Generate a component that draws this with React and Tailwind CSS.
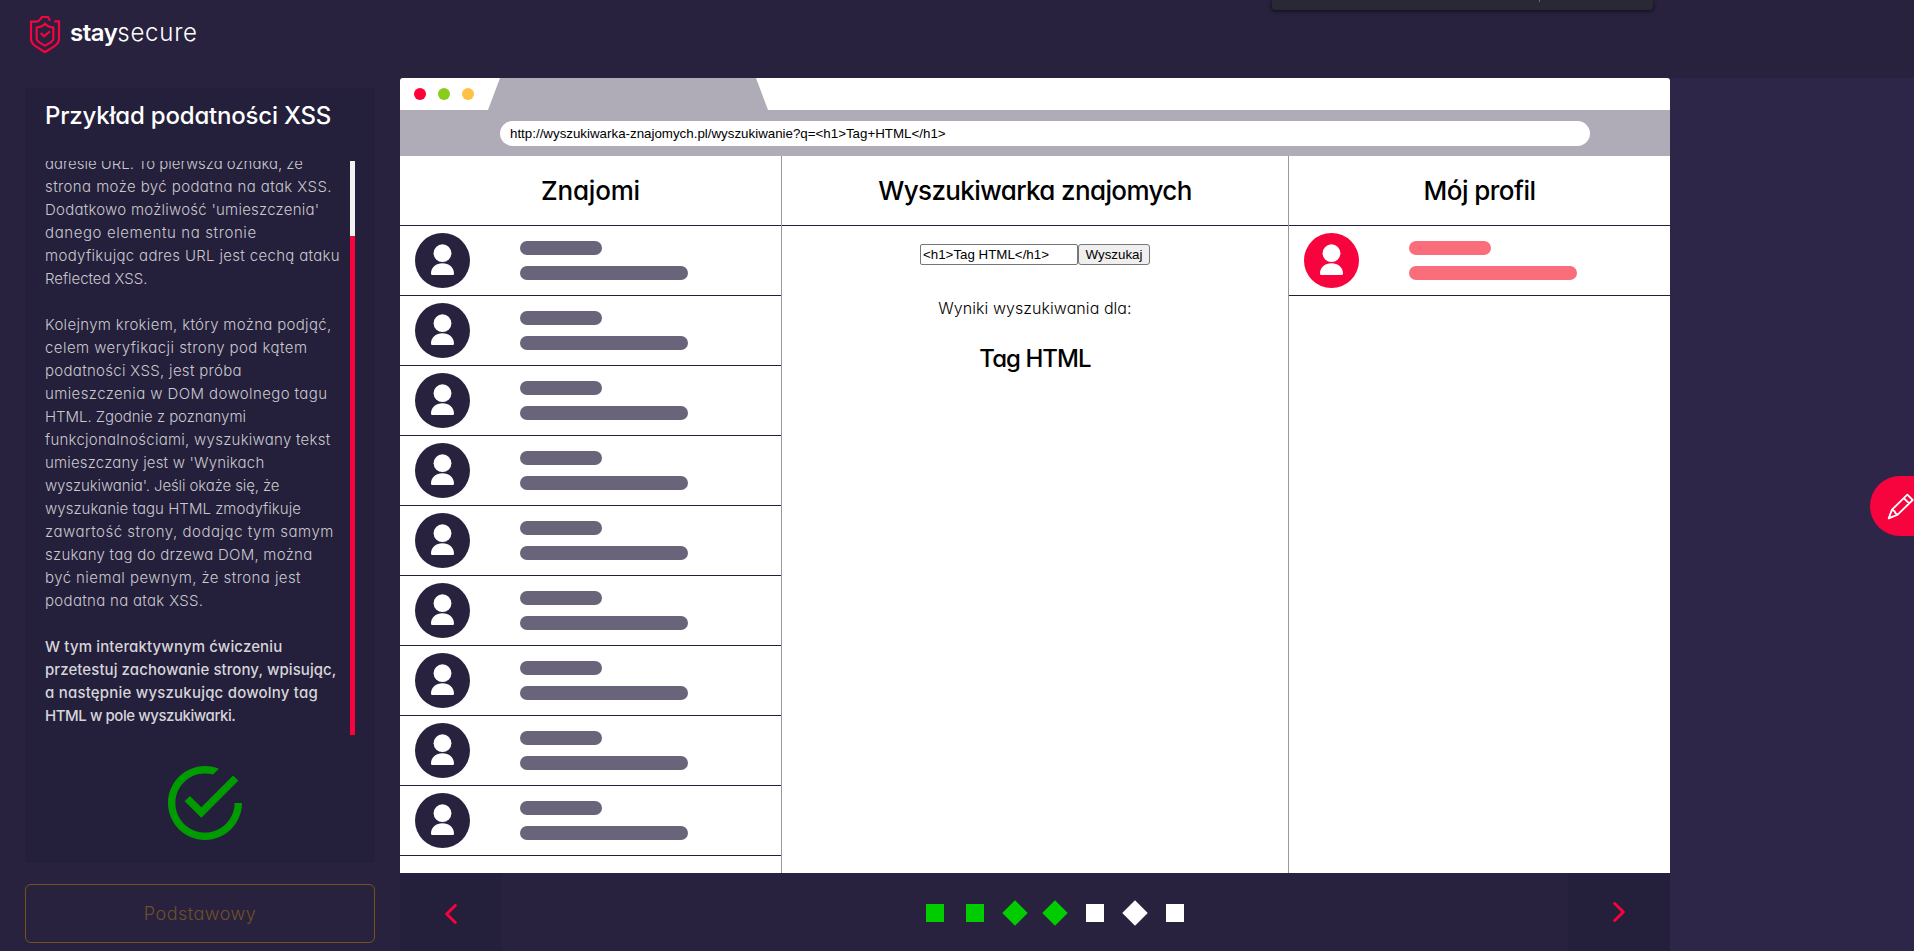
import { IoMdCheckmarkCircleOutline } from "react-icons/io";

const lessonLines = [
  ["adresie URL. To pierwsza oznaka, że", "tracking-[-0.04px]"],
  ["strona może być podatna na atak XSS.", "tracking-[0.4px]"],
  ["Dodatkowo możliwość 'umieszczenia'", "tracking-[0.24px]"],
  ["danego elementu na stronie", "tracking-[0.6px]"],
  ["modyfikując adres URL jest cechą ataku", "tracking-[0.325px]"],
  ["Reflected XSS.", "tracking-[-0.05px]"],
  null,
  ["Kolejnym krokiem, który można podjąć,", "tracking-[0.31px]"],
  ["celem weryfikacji strony pod kątem", "tracking-[0.435px]"],
  ["podatności XSS, jest próba", "tracking-[0.3px]"],
  ["umieszczenia w DOM dowolnego tagu", "tracking-[0.395px]"],
  ["HTML. Zgodnie z poznanymi", "tracking-[-0.05px]"],
  ["funkcjonalnościami, wyszukiwany tekst", "tracking-[0.255px]"],
  ["umieszczany jest w 'Wynikach", "tracking-[0.175px]"],
  ["wyszukiwania'. Jeśli okaże się, że", "tracking-[-0.11px]"],
  ["wyszukanie tagu HTML zmodyfikuje", "tracking-[0.035px]"],
  ["zawartość strony, dodając tym samym", "tracking-[0.52px]"],
  ["szukany tag do drzewa DOM, można", "tracking-[0.26px]"],
  ["być niemal pewnym, że strona jest", "tracking-[0.425px]"],
  ["podatna na atak XSS.", "tracking-[0.31px]"],
  null,
];

const taskLines = [
  ["W tym interaktywnym ćwiczeniu", "tracking-[0.145px]"],
  ["przetestuj zachowanie strony, wpisując,", "tracking-[0.075px]"],
  ["a następnie wyszukując dowolny tag", "tracking-[0.205px]"],
  ["HTML w pole wyszukiwarki.", "tracking-[-0.44px]"],
];

const steps = [
  { shape: "square", done: true },
  { shape: "square", done: true },
  { shape: "diamond", done: true },
  { shape: "diamond", done: true },
  { shape: "square", done: false },
  { shape: "diamond", done: false },
  { shape: "square", done: false },
];

function TextLine({ line }) {
  if (!line) return <div className="h-[23px]" />;
  return <div className={`h-[23px] whitespace-nowrap ${line[1]}`}>{line[0]}</div>;
}

function Logo() {
  return (
    <header className="flex h-[78px] items-start bg-[#28223f] pl-[29px] pt-[15px]">
      <svg viewBox="87 45 96 117" className="h-[39px] w-8" fill="none" stroke="#f7033d" strokeWidth="6.5">
        <path d="M150 62l-6-11h-18l-6 8q-4 6-11 6H93v52c0 17 21 26 42 39 21-13 42-22 42-39V64h-14" />
        <path d="M135 71c-7 8-15 10-25 12v33c0 9 14 14 25 21 11-7 25-12 25-21V83c-10-2-18-4-25-12z" />
        <path d="M122 99l10 10 18-15" />
      </svg>
      <div className="ml-[9px] mt-0.5 flex text-2xl leading-8 text-white">
        <span className="font-semibold tracking-[-0.5px]">stay</span>
        <span className="font-light tracking-[0.75px]">secure</span>
      </div>
    </header>
  );
}

function Sidebar() {
  return (
    <aside className="flex w-[400px] shrink-0 flex-col bg-[#28223f] px-[25px] pt-[10px]">
      <section className="flex h-[775px] flex-col bg-[#241f3a] pl-5 pr-5 pt-3">
        <h1 className="h-[61px] whitespace-nowrap text-2xl font-medium leading-8 tracking-[-0.19px] text-white">
          Przykład podatności XSS
        </h1>
        <div className="flex h-[574px] justify-between overflow-hidden">
          <div className="-mt-[9px] w-[300px] text-[15px] leading-[23px] text-[#c9c8ce]">
            <div className="font-light">
              {lessonLines.map((line, i) => (
                <TextLine key={i} line={line} />
              ))}
            </div>
            <div className="font-medium text-[#d6d5da]">
              {taskLines.map((line, i) => (
                <TextLine key={i} line={line} />
              ))}
            </div>
          </div>
          <div className="h-full w-[5px] bg-[#f7033d]">
            <div className="h-[75px] bg-[#f2f2f2]" />
          </div>
        </div>
        <div className="flex justify-center pl-[10px] pt-[31px]">
          <IoMdCheckmarkCircleOutline viewBox="48 48 416 416" className="size-[74px] text-[#009b00]" />
        </div>
      </section>
      <button className="mt-[21px] h-[59px] rounded-md border border-[#73541f] text-lg font-light tracking-[0.5px] text-[#6d502a]">
        Podstawowy
      </button>
    </aside>
  );
}

function Person({ circle, bar }) {
  return (
    <div className="flex h-[70px] items-start border-b border-[#241f3a] pl-[15px] pt-[7px]">
      <svg viewBox="0 0 55 55" className="size-[55px]">
        <circle cx="27.5" cy="27.5" r="27.5" className={circle} />
        <circle cx="27.5" cy="20.2" r="8.9" fill="#fff" />
        <path
          d="M17.3 42a1.3 1.3 0 0 1-1.3-1.3C16 34.2 21.2 30.3 27.5 30.3S39 34.2 39 40.7a1.3 1.3 0 0 1-1.3 1.3z"
          fill="#fff"
        />
      </svg>
      <div className="ml-[50px] flex flex-col gap-[11px] pt-2">
        <div className={`h-[14px] w-[82px] rounded-full ${bar}`} />
        <div className={`h-[14px] w-[168px] rounded-full ${bar}`} />
      </div>
    </div>
  );
}

function ColumnTitle({ children, tracking }) {
  return (
    <h2
      className={`flex h-[70px] items-center justify-center whitespace-nowrap border-b border-[#241f3a] pb-px text-[26px] font-medium ${tracking}`}
    >
      {children}
    </h2>
  );
}

function BrowserWindow() {
  return (
    <div className="flex h-[795px] flex-col overflow-hidden rounded-t-[3px] bg-white text-black">
      <div className="flex h-8">
        <div className="flex w-[88px] items-center gap-3 pl-[14px]">
          <span className="size-3 rounded-full bg-[#ff0039]" />
          <span className="size-3 rounded-full bg-[#88cc1c]" />
          <span className="size-3 rounded-full bg-[#ffc045]" />
        </div>
        <svg viewBox="0 0 280 32" className="h-8 w-[280px]">
          <path d="M0 32L12 0h256l12 32z" fill="#afacb7" />
        </svg>
      </div>
      <div className="h-[46px] bg-[#afacb7] pl-[100px] pr-20 pt-[11px]">
        <div className="flex h-[25px] items-center rounded-full bg-white px-[10px] font-['Liberation_Sans',Arial,sans-serif] text-[13.333px]">
          http://wyszukiwarka-znajomych.pl/wyszukiwanie?q=&lt;h1&gt;Tag+HTML&lt;/h1&gt;
        </div>
      </div>
      <div className="flex grow">
        <section className="w-[381px]">
          <ColumnTitle tracking="tracking-[-0.2px]">Znajomi</ColumnTitle>
          {Array.from({ length: 9 }, (_, i) => (
            <Person key={i} circle="fill-[#28223f]" bar="bg-[#696479]" />
          ))}
        </section>
        <section className="w-[508px] border-x border-[#999999]">
          <ColumnTitle tracking="tracking-[-0.63px]">Wyszukiwarka znajomych</ColumnTitle>
          <div className="flex flex-col items-center">
            <div className="mt-[18px] flex font-['Liberation_Sans',Arial,sans-serif] text-[13.333px]">
              <input
                className="h-[21px] w-[158px] rounded-[2px] border border-[#767676] px-[2px] outline-none"
                defaultValue="<h1>Tag HTML</h1>"
              />
              <button className="h-[21px] w-[72px] rounded-[3px] border border-[#767676] bg-[#efefef] leading-none">
                Wyszukaj
              </button>
            </div>
            <p className="mt-[31px] text-base font-light leading-6 tracking-[0.06px]">Wyniki wyszukiwania dla:</p>
            <h1 className="mt-[23px] text-2xl font-medium leading-8 tracking-[-0.95px]">Tag HTML</h1>
          </div>
        </section>
        <section className="w-[381px]">
          <ColumnTitle tracking="tracking-[-0.55px]">Mój profil</ColumnTitle>
          <Person circle="fill-[#f7033d]" bar="bg-[#fa6d7b]" />
        </section>
      </div>
    </div>
  );
}

function StepBar() {
  return (
    <nav className="flex h-[78px] items-center justify-between bg-[#28223f]">
      <button className="flex h-full w-[102px] items-center justify-center bg-[#241f3a] pr-px pt-[4px]">
        <svg viewBox="0 0 12 20" className="h-5 w-3" fill="none" stroke="#f7033d" strokeWidth="3" strokeLinecap="round" strokeLinejoin="round">
          <path d="M10.3 1.5L1.7 10l8.6 8.5" />
        </svg>
      </button>
      <div className="flex gap-[22px] pl-10 pt-[2px]">
        {steps.map((step, i) => (
          <span
            key={i}
            className={`size-[18px] ${step.shape === "diamond" ? "rotate-45" : ""} ${step.done ? "bg-[#00cc00]" : "bg-white"}`}
          />
        ))}
      </div>
      <button className="flex h-full w-[102px] items-center justify-center bg-[#241f3a]">
        <svg viewBox="0 0 12 20" className="h-5 w-3" fill="none" stroke="#f7033d" strokeWidth="3" strokeLinecap="round" strokeLinejoin="round">
          <path d="M1.7 1.5l8.6 8.5-8.6 8.5" />
        </svg>
      </button>
    </nav>
  );
}

export default function App() {
  return (
    <div className="relative flex h-[951px] w-[1914px] flex-col overflow-hidden bg-[#2e2649] font-['Inter',sans-serif]">
      <Logo />
      <main className="flex grow [font-feature-settings:'cv11']">
        <Sidebar />
        <div className="w-[1270px]">
          <BrowserWindow />
          <StepBar />
        </div>
      </main>
      <div className="absolute left-[1272px] top-0 flex h-[10px] w-[381px] rounded-b-[3px] bg-[#292835] pl-[267px] shadow-[0_1px_4px_rgba(0,0,0,0.7)]">
        <span className="h-[2px] w-px bg-[#6a6974]" />
      </div>
      <button className="absolute right-0 top-[476px] h-[60px] w-11 rounded-l-full bg-[#f7033d] pl-[17px]">
        <svg viewBox="1041 156 81 81" className="size-[27px]" fill="none" stroke="#fff" strokeWidth="5.5" strokeLinejoin="round">
          <path d="M1046 232l10-26 46-45 16 16-45 44zM1091 171l17 17M1056 206l8 5 2 5 7 5" />
        </svg>
      </button>
    </div>
  );
}
